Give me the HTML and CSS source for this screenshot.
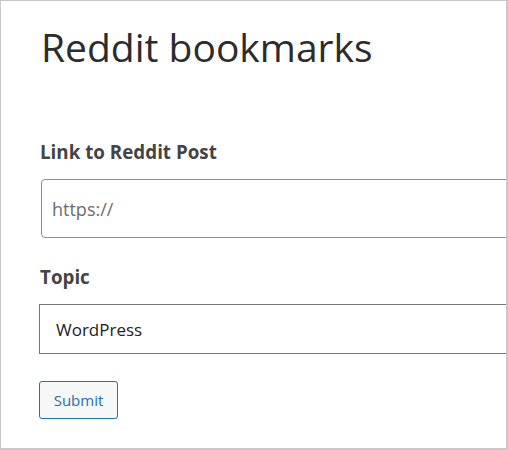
FILE: index.html
```html
<!DOCTYPE html>
<html>
<head>
<meta charset="utf-8">
<link rel="stylesheet" href="styles.css">
</head>
<body>
<div class="frame">
  <div class="page">
    <h1 class="title">Reddit bookmarks</h1>
    <form class="bookmark-form">
      <label class="field-label" for="link">Link to Reddit Post</label>
      <input class="link-input" type="text" id="link" placeholder="https://">
      <label class="field-label topic-label" for="topic">Topic</label>
      <div class="topic-select" id="topic">WordPress</div>
      <button class="submit-btn" type="button">Submit</button>
    </form>
  </div>
</div>
</body>
</html>
```

FILE: styles.css
```css
html, body {
	margin: 0;
	padding: 0;
	background: #ffffff;
}
body {
	font-family: "Open Sans", "Noto Sans", Arial, sans-serif;
	color: #333333;
}
.frame {
	width: 508px;
	height: 450px;
	box-sizing: border-box;
	border-top: 1px solid #c8c8c8;
	border-left: 1px solid #c8c8c8;
	border-right: 2px solid #c8c8c8;
	border-bottom: 2px solid #c8c8c8;
	overflow: hidden;
}
.page {
	padding-left: 38px;
	width: 560px;
}
.title {
	margin: 20px 0 0 2px;
	font-size: 39px;
	font-weight: 400;
	line-height: 52px;
	color: #2c2c2c;
}
.bookmark-form {
	display: flex;
	flex-direction: column;
	align-items: flex-start;
}
.field-label {
	margin-top: 67px;
	margin-left: 1px;
	font-size: 18.8px;
	font-weight: 700;
	line-height: 24px;
	color: #444444;
}
.topic-label {
	margin-top: 27px;
}
.link-input {
	margin-top: 15px;
	margin-left: 2px;
	width: 100%;
	height: 59px;
	box-sizing: border-box;
	border: 1px solid #8c8f94;
	border-radius: 4px;
	padding: 0 10px;
	font-family: inherit;
	font-size: 18px;
	color: #333333;
	outline: none;
}
.link-input::placeholder {
	color: #6c6c6c;
}
.topic-select {
	margin-top: 15px;
	width: 100%;
	height: 50px;
	box-sizing: border-box;
	border: 1px solid #767676;
	padding: 0 16px;
	display: flex;
	align-items: center;
	font-size: 17px;
	color: #222222;
}
.submit-btn {
	margin-top: 27px;
	width: 79px;
	height: 38px;
	border: 1px solid #2271b1;
	border-radius: 3px;
	background: #f6f7f7;
	color: #2271b1;
	font-family: inherit;
	font-size: 15px;
	padding: 0;
}
```
